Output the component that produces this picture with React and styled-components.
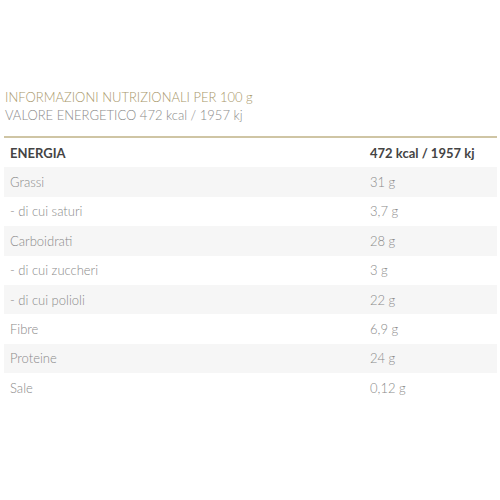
import React from "react";
import styled, { createGlobalStyle } from "styled-components";

const Global = createGlobalStyle`
  html, body { margin: 0; padding: 0; background: #fff; }
  body { font-family: Lato, "Open Sans", sans-serif; }
`;

const Page = styled.div`
  width: 500px;
  height: 500px;
  box-sizing: border-box;
  padding: 88px 3px 0 4px;
`;

const Heading = styled.div`
  padding-left: 1px;
  font-size: 13px;
  font-weight: 300;
  line-height: 18px;
  color: ${(p) => (p.$gold ? "#a8976a" : "#8a8a8a")};
`;

const Table = styled.div`
  margin-top: 12px;
  border-top: 2px solid #cfc5a4;
  display: flex;
  flex-direction: column;
`;

const Row = styled.div`
  display: grid;
  grid-template-columns: 362px 1fr;
  height: 29.4px;
  align-items: center;
  background: ${(p) => (p.$shade ? "#f6f6f6" : "#fff")};
`;

const Cell = styled.div`
  padding-left: ${(p) => (p.$value ? "4px" : "6px")};
  font-size: 13px;
  font-weight: ${(p) => (p.$head ? 700 : 300)};
  color: ${(p) => (p.$head ? "#444" : "#8a8a8a")};
  white-space: nowrap;
`;

const rows = [
  ["Grassi", "31 g"],
  ["- di cui saturi", "3,7 g"],
  ["Carboidrati", "28 g"],
  ["- di cui zuccheri", "3 g"],
  ["- di cui polioli", "22 g"],
  ["Fibre", "6,9 g"],
  ["Proteine", "24 g"],
  ["Sale", "0,12 g"],
];

export default function App() {
  return (
    <Page>
      <Global />
      <Heading $gold>INFORMAZIONI NUTRIZIONALI PER 100 g</Heading>
      <Heading>VALORE ENERGETICO 472 kcal / 1957 kj</Heading>
      <Table>
        <Row>
          <Cell $head>ENERGIA</Cell>
          <Cell $head $value>472 kcal / 1957 kj</Cell>
        </Row>
        {rows.map(([k, v], i) => (
          <Row key={k} $shade={i % 2 === 0}>
            <Cell>{k}</Cell>
            <Cell $value>{v}</Cell>
          </Row>
        ))}
      </Table>
    </Page>
  );
}
